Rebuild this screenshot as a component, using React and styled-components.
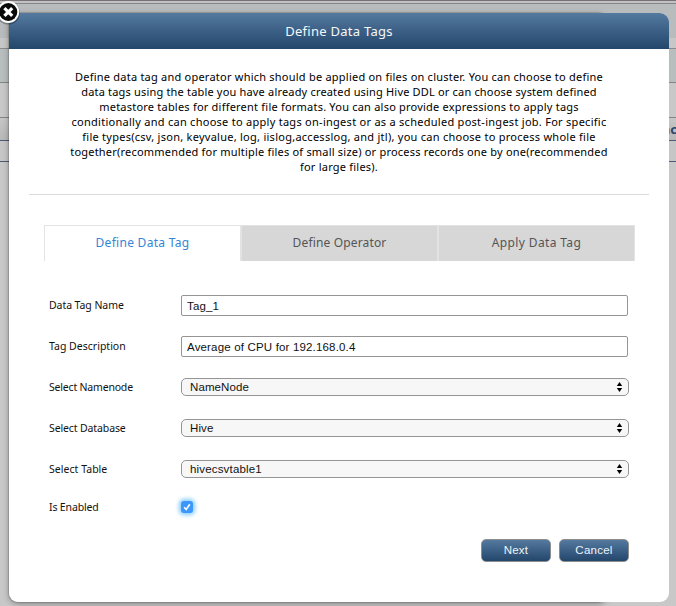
import React from "react";
import styled, { createGlobalStyle } from "styled-components";

const GlobalStyle = createGlobalStyle`
  * { box-sizing: border-box; }
  body { margin: 0; overflow: hidden; background: #c8c8c8; }
`;

const blue = "linear-gradient(#557a9f, #23466b)";

const Page = styled.div`
  position: relative;
  width: 676px;
  height: 606px;
  overflow: hidden;
  font-family: "Noto Sans", "Open Sans", sans-serif;
  color: #111;
`;

const Backdrop = styled.div`
  display: flex;
  flex-direction: column;
  height: 606px;
`;

const Band = styled.div`
  flex: none;
  height: ${(p) => p.$h}px;
  background: ${(p) => p.$bg};
  border-bottom: 1px solid ${(p) => p.$line || "#858585"};
`;

const Rest = styled.div`
  flex: 1;
  background: #c8c8c8;
`;

const CutHeading = styled.div`
  position: absolute;
  right: -1px;
  top: 119px;
  font: bold 13px/20px "Noto Sans", sans-serif;
  color: #2b476c;
`;

const Dialog = styled.section`
  position: absolute;
  left: 9px;
  top: 13px;
  width: 660px;
  height: 589px;
  display: flex;
  flex-direction: column;
  background: #fff;
  border-radius: 9px;
`;

const Shade = styled.div`
  position: absolute;
  left: 9px;
  top: 13px;
  width: 598px;
  height: 589px;
  border-radius: 9px;
  box-shadow: 0 0 1px 1px rgba(0, 0, 0, 0.15), 0 2px 6px rgba(0, 0, 0, 0.32);
`;

const TitleBar = styled.header`
  height: 36px;
  line-height: 37px;
  border-radius: 9px 9px 0 0;
  background: ${blue};
  color: #f4f7fa;
  text-align: center;
  font-size: 13px;
  letter-spacing: 0.27px;
`;

const Intro = styled.div`
  display: flex;
  flex-direction: column;
  align-items: center;
  height: 146px;
  margin: 0 20px;
  padding-top: 20px;
  border-bottom: 1px solid #dadada;
`;

const IntroLine = styled.div`
  height: 15px;
  font-size: 11px;
  line-height: 15px;
  white-space: nowrap;
  color: #000;
  letter-spacing: ${(p) => p.$track}px;
`;

const Tabs = styled.nav`
  display: grid;
  grid-template-columns: repeat(3, 197px);
  height: 36px;
  margin: 30px 0 0 35px;
`;

const Tab = styled.div`
  border: 1px solid #e3e3e3;
  border-bottom: 0;
  background: ${(p) => (p.$active ? "#fff" : "#d7d7d7")};
  color: ${(p) => (p.$active ? "#3586d6" : "#555")};
  font-size: 12px;
  line-height: 34px;
  text-align: center;
  letter-spacing: ${(p) => p.$track}px;
`;

const Form = styled.div`
  display: flex;
  flex-direction: column;
  margin: 23px 40px 0;
`;

const Field = styled.div`
  display: grid;
  grid-template-columns: 132px 448px;
  align-items: center;
  height: ${(p) => p.$h || 41}px;
`;

const Label = styled.label`
  font-size: 10.5px;
  line-height: 16px;
  letter-spacing: ${(p) => p.$track}px;
`;

const TextInput = styled.div`
  width: 447px;
  height: 21px;
  margin-top: 2px;
  padding-left: 5px;
  border: 1px solid #959595;
  border-radius: 2px;
  font: 11.5px/20px "Liberation Sans", Arial, sans-serif;
  letter-spacing: 0.17px;
`;

const SelectBox = styled.div`
  display: flex;
  justify-content: space-between;
  align-items: center;
  height: 18px;
  padding: 0 5px 0 8px;
  border: 1px solid #959595;
  border-radius: 5px;
  background: #f7f7f7;
  font: 11.5px/16px "Liberation Sans", Arial, sans-serif;
  letter-spacing: ${(p) => p.$track}px;
`;

const Check = styled.div`
  display: flex;
  align-items: center;
  justify-content: center;
  width: 12px;
  height: 12px;
  border-radius: 3px;
  background: #3b97fb;
  box-shadow: 0 0 4px 2px #86ccfb;
`;

const Actions = styled.footer`
  display: flex;
  gap: 8px;
  margin: 14px 0 0 472px;
`;

const Button = styled.button`
  width: 70px;
  height: 23px;
  padding: 0;
  border: 1px solid #8d8d8d;
  border-radius: 5px;
  background: ${blue};
  color: #f0f4f8;
  font: 11.5px/19px "Liberation Sans", Arial, sans-serif;
  letter-spacing: 0.25px;
`;

const Close = styled.svg`
  position: absolute;
  left: -4px;
  top: 0;
`;

const intro = [
  ["Define data tag and operator which should be applied on files on cluster. You can choose to define", 0.228],
  ["data tags using the table you have already created using Hive DDL or can choose system defined", 0.18],
  ["metastore tables for different file formats. You can also provide expressions to apply tags", 0.217],
  ["conditionally and can choose to apply tags on-ingest or as a scheduled post-ingest job. For specific", 0.273],
  ["file types(csv, json, keyvalue, log, iislog,accesslog, and jtl), you can choose to process whole file", 0.262],
  ["together(recommended for multiple files of small size) or process records one by one(recommended", 0.204],
  ["for large files).", 0.218],
];

const selects = [
  ["Select Namenode", -0.19, "NameNode", 0.1],
  ["Select Database", -0.12, "Hive", 0.1],
  ["Select Table", 0.04, "hivecsvtable1", 0.17],
];

const Arrows = () => (
  <svg width="7" height="10" viewBox="0 0 7 10">
    <path d="M3.5 0 6.2 4H.8ZM3.5 10 .8 6h5.4Z" fill="#000" />
  </svg>
);

export default function App() {
  return (
    <Page>
      <GlobalStyle />
      <Backdrop>
        <Band $h={1} $bg="#aaa" $line="#777175" />
        <Band $h={3} $bg="#c2c2c2" $line="#858585" />
        <Band $h={34} $bg="#b8bcbc" $line="#b8bcbc" />
        <Band $h={11} $bg="#c7c7c7" $line="#8a8a8a" />
        <Band $h={34} $bg="#b8bebe" />
        <Band $h={35} $bg="#c8c8c8" />
        <Band $h={23} $bg="linear-gradient(#c6c6c6, #b7b7b7)" $line="#4c5c78" />
        <Band $h={21} $bg="#c6c6c6" $line="#4c5c78" />
        <Rest />
      </Backdrop>
      <CutHeading>nc</CutHeading>
      <Shade />
      <Dialog>
        <TitleBar>Define Data Tags</TitleBar>
        <Intro>
          {intro.map(([text, track]) => (
            <IntroLine key={text} $track={track}>{text}</IntroLine>
          ))}
        </Intro>
        <Tabs>
          <Tab $active $track={0.29}>Define Data Tag</Tab>
          <Tab $track={0.15}>Define Operator</Tab>
          <Tab $track={0.36}>Apply Data Tag</Tab>
        </Tabs>
        <Form>
          <Field>
            <Label $track={-0.07}>Data Tag Name</Label>
            <TextInput>Tag_1</TextInput>
          </Field>
          <Field>
            <Label $track={0.01}>Tag Description</Label>
            <TextInput>Average of CPU for 192.168.0.4</TextInput>
          </Field>
          {selects.map(([label, track, value, valueTrack]) => (
            <Field key={label}>
              <Label $track={track}>{label}</Label>
              <SelectBox $track={valueTrack}>
                {value}
                <Arrows />
              </SelectBox>
            </Field>
          ))}
          <Field $h={36}>
            <Label $track={-0.15}>Is Enabled</Label>
            <Check>
              <svg width="8" height="8" viewBox="0 0 8 8">
                <path d="M1.2 4.3 3.2 6.5 6.8 1.2" fill="none" stroke="#fff" strokeWidth="1.6" />
              </svg>
            </Check>
          </Field>
        </Form>
        <Actions>
          <Button>Next</Button>
          <Button>Cancel</Button>
        </Actions>
      </Dialog>
      <Close width="25" height="26" viewBox="0 0 25 26">
        <circle cx="12.3" cy="13" r="11.6" fill="#000" opacity="0.3" />
        <circle cx="12.3" cy="12" r="10.9" fill="#fff" />
        <circle cx="12.3" cy="12" r="9" fill="#0a0a0a" />
        <path d="m8.4 8.1 7.8 7.8m0-7.8-7.8 7.8" stroke="#fff" strokeWidth="3.2" />
      </Close>
    </Page>
  );
}
